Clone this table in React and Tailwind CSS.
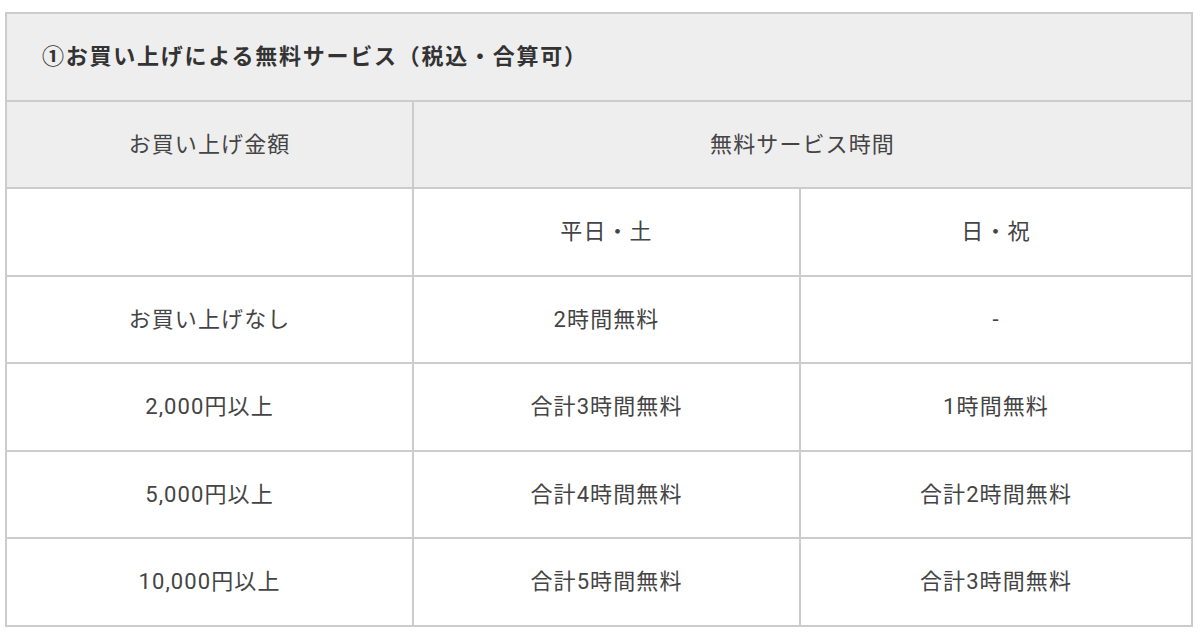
import React from "react";

const rows = [
  { amount: "お買い上げなし", weekday: "2時間無料", holiday: "-" },
  { amount: "2,000円以上", weekday: "合計3時間無料", holiday: "1時間無料" },
  { amount: "5,000円以上", weekday: "合計4時間無料", holiday: "合計2時間無料" },
  { amount: "10,000円以上", weekday: "合計5時間無料", holiday: "合計3時間無料" },
];

const cell = "border-2 border-[#cccccc] text-center align-middle h-[87.5px] p-0";

const App = () => {
  return (
    <div className="bg-white w-[1200px] h-[635px] pt-3 pl-[5px] font-['Roboto','Noto_Sans_CJK_JP',sans-serif] text-[#444444] text-[22px] tracking-[0.05em]">
      <table className="border-collapse w-[1188px] table-fixed">
        <colgroup>
          <col className="w-[407px]" />
          <col className="w-[387px]" />
          <col />
        </colgroup>
        <tbody>
          <tr>
            <td
              colSpan={3}
              className="border-2 border-[#cccccc] bg-[#eeeeee] h-[87.5px] pl-[35px] text-left font-bold text-[#333333] tracking-[0.08em]"
            >
              ①お買い上げによる無料サービス（税込・合算可）
            </td>
          </tr>
          <tr className="bg-[#eeeeee]">
            <td className={cell}>お買い上げ金額</td>
            <td colSpan={2} className={cell}>
              無料サービス時間
            </td>
          </tr>
          <tr>
            <td className={cell}></td>
            <td className={cell}>平日・土</td>
            <td className={cell}>日・祝</td>
          </tr>
          {rows.map((row, index) => (
            <tr key={index}>
              <td className={cell}>{row.amount}</td>
              <td className={cell}>{row.weekday}</td>
              <td className={cell}>{row.holiday}</td>
            </tr>
          ))}
        </tbody>
      </table>
    </div>
  );
};

export default App;
